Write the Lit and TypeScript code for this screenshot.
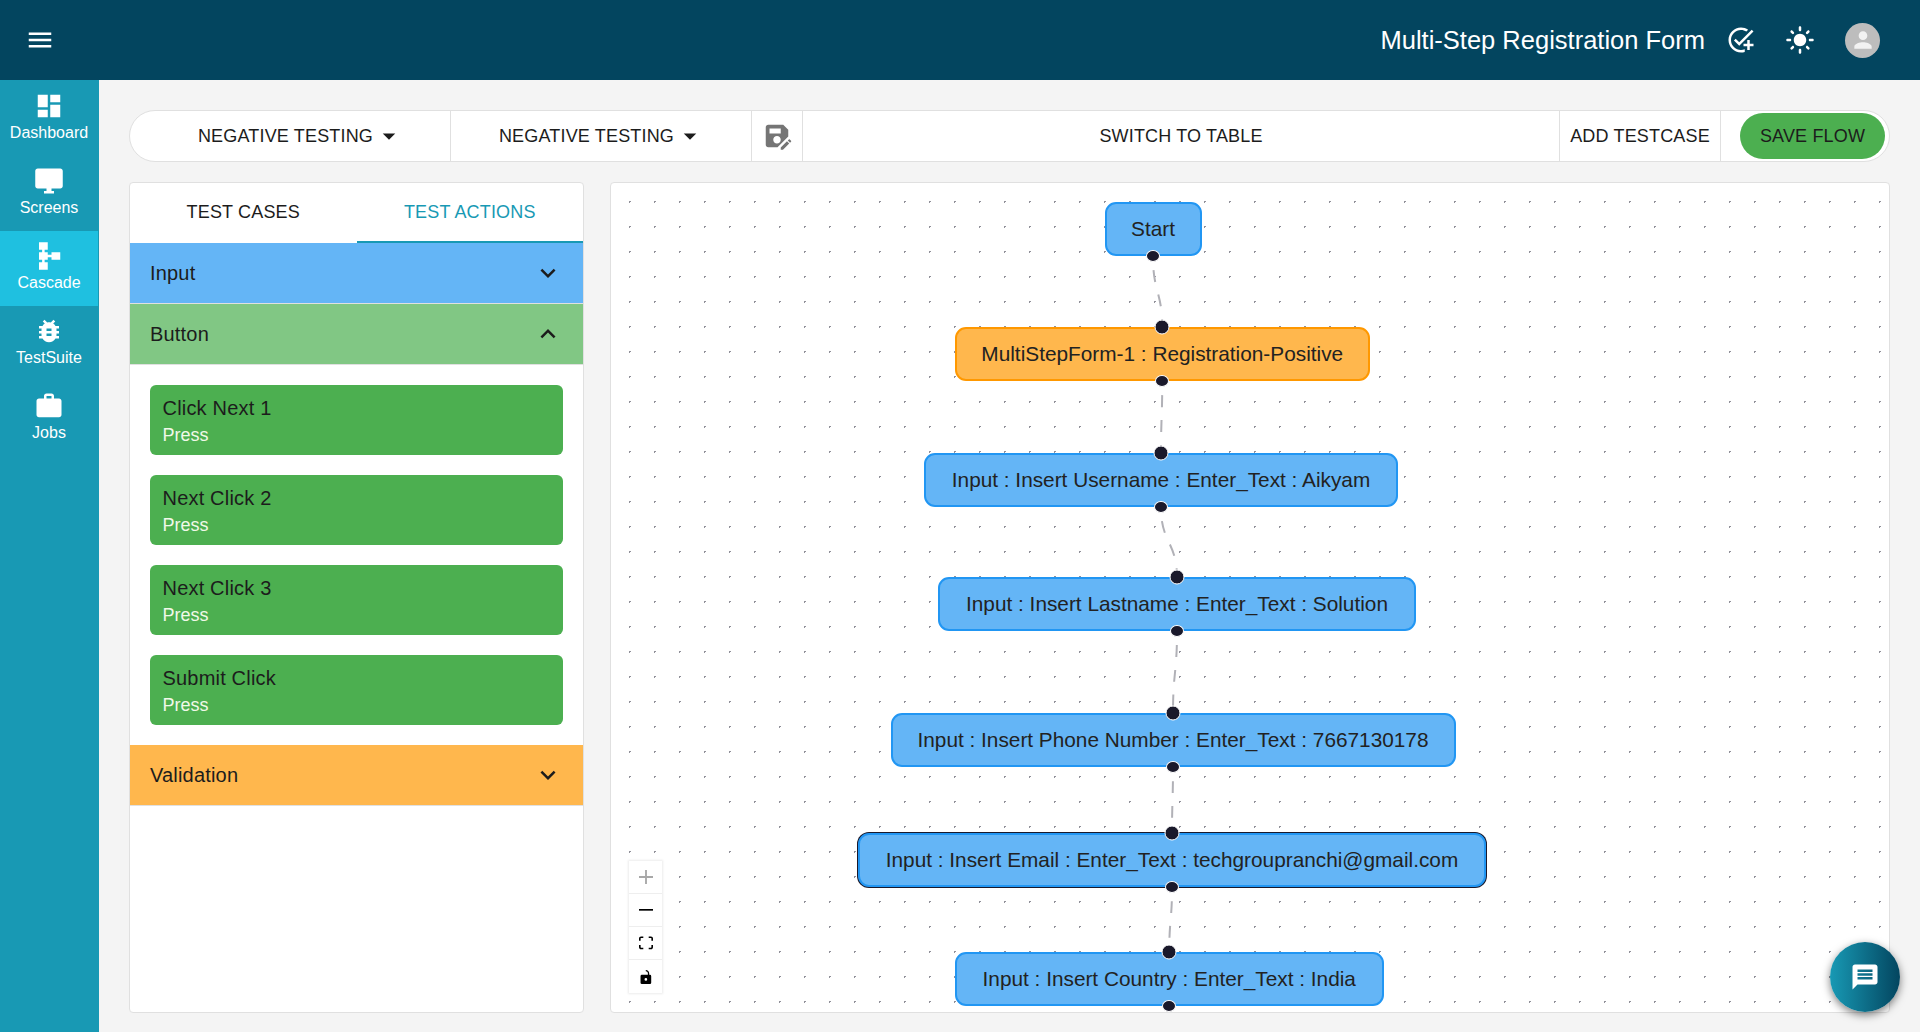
import { LitElement, css, html, svg } from 'lit';
import { customElement } from 'lit/decorators.js';

const ICONS = {
  menu: 'M3 18h18v-2H3v2zm0-5h18v-2H3v2zm0-7v2h18V6H3z',
  dashboard: 'M3 13h8V3H3v10zm0 8h8v-6H3v6zm10 0h8V11h-8v10zm0-18v6h8V3h-8z',
  screens: 'M21 2H3c-1.1 0-2 .9-2 2v12c0 1.1.9 2 2 2h7v2H8v2h8v-2h-2v-2h7c1.1 0 2-.9 2-2V4c0-1.1-.9-2-2-2z',
  cascade: 'M14 9v2h-3V9H8.5V7H11V1H4v6h2.5v2H4v6h2.5v2H4v6h7v-6H8.5v-2H11v-2h3v2h7V9h-7z',
  bug: 'M20 8h-2.81c-.45-.78-1.07-1.45-1.82-1.96L17 4.41 15.59 3l-2.17 2.17C12.96 5.06 12.49 5 12 5c-.49 0-.96.06-1.41.17L8.41 3 7 4.41l1.62 1.63C7.88 6.55 7.26 7.22 6.81 8H4v2h2.09c-.05.33-.09.66-.09 1v1H4v2h2v1c0 .34.04.67.09 1H4v2h2.81c1.04 1.79 2.97 3 5.19 3s4.15-1.21 5.19-3H20v-2h-2.09c.05-.33.09-.66.09-1v-1h2v-2h-2v-1c0-.34-.04-.67-.09-1H20V8zm-6 8h-4v-2h4v2zm0-4h-4v-2h4v2z',
  work: 'M20 6h-4V4c0-1.11-.89-2-2-2h-4c-1.11 0-2 .89-2 2v2H4c-1.11 0-1.99.89-1.99 2L2 19c0 1.11.89 2 2 2h16c1.11 0 2-.89 2-2V8c0-1.11-.89-2-2-2zm-6 0h-4V4h4v2z',
  addTask: 'M22 5.18 10.59 16.6l-4.24-4.24 1.41-1.41 2.83 2.83 10-10L22 5.18zM12 20c-4.42 0-8-3.58-8-8s3.58-8 8-8c1.58 0 3.04.46 4.28 1.25l1.44-1.44C16.1 2.67 14.13 2 12 2 6.48 2 2 6.48 2 12s4.48 10 10 10c1.05 0 2.05-.16 3-.46v-2.1c-.93.36-1.94.56-3 .56zm7-5v-3h-2v3h-3v2h3v3h2v-3h3v-2h-3z',
  sun: 'M12 7c-2.76 0-5 2.24-5 5s2.24 5 5 5 5-2.24 5-5-2.24-5-5-5zM2 13h2c.55 0 1-.45 1-1s-.45-1-1-1H2c-.55 0-1 .45-1 1s.45 1 1 1zm18 0h2c.55 0 1-.45 1-1s-.45-1-1-1h-2c-.55 0-1 .45-1 1s.45 1 1 1zM11 2v2c0 .55.45 1 1 1s1-.45 1-1V2c0-.55-.45-1-1-1s-1 .45-1 1zm0 18v2c0 .55.45 1 1 1s1-.45 1-1v-2c0-.55-.45-1-1-1s-1 .45-1 1zM5.99 4.58c-.39-.39-1.03-.39-1.41 0-.39.39-.39 1.03 0 1.41l1.06 1.06c.39.39 1.03.39 1.41 0s.39-1.03 0-1.41L5.99 4.58zm12.37 12.37c-.39-.39-1.03-.39-1.41 0-.39.39-.39 1.03 0 1.41l1.06 1.06c.39.39 1.03.39 1.41 0 .39-.39.39-1.03 0-1.41l-1.06-1.06zm1.06-10.96c.39-.39.39-1.03 0-1.41-.39-.39-1.03-.39-1.41 0l-1.06 1.06c-.39.39-.39 1.03 0 1.41s1.03.39 1.41 0l1.06-1.06zM7.05 18.36c.39-.39.39-1.03 0-1.41-.39-.39-1.03-.39-1.41 0l-1.06 1.06c-.39.39-.39 1.03 0 1.41s1.03.39 1.41 0l1.06-1.06z',
  person: 'M12 12c2.21 0 4-1.79 4-4s-1.79-4-4-4-4 1.79-4 4 1.79 4 4 4zm0 2c-2.67 0-8 1.34-8 4v2h16v-2c0-2.66-5.33-4-8-4z',
  saveAs: 'M21 12.4V7l-4-4H5c-1.11 0-2 .9-2 2v14c0 1.1.89 2 2 2h7.4l8.6-8.6zM15 15c0 1.66-1.34 3-3 3s-3-1.34-3-3 1.34-3 3-3 3 1.34 3 3zM6 6h9v4H6V6zm13.99 10.25 1.77 1.77L16.77 23H15v-1.77l4.99-4.98zm3.26.26-.85.85-1.77-1.77.85-.85c.2-.2.51-.2.71 0l1.06 1.06c.2.2.2.52 0 .71z',
  caret: 'm7 10 5 5 5-5z',
  expandMore: 'M16.59 8.59 12 13.17 7.41 8.59 6 10l6 6 6-6z',
  expandLess: 'm12 8-6 6 1.41 1.41L12 10.83l4.59 4.58L18 14z',
  message: 'M20 2H4c-1.1 0-1.99.9-1.99 2L2 22l4-4h14c1.1 0 2-.9 2-2V4c0-1.1-.9-2-2-2zm-2 12H6v-2h12v2zm0-3H6V9h12v2zm0-3H6V6h12v2z',
};

const NAV = [
  { label: 'Dashboard', icon: ICONS.dashboard },
  { label: 'Screens', icon: ICONS.screens },
  { label: 'Cascade', icon: ICONS.cascade, active: true },
  { label: 'TestSuite', icon: ICONS.bug },
  { label: 'Jobs', icon: ICONS.work },
];

const ACTIONS = ['Click Next 1', 'Next Click 2', 'Next Click 3', 'Submit Click'];

// canvas coordinates, the canvas inner box starts at 611,183
const NODES = [
  { text: 'Start', x: 493.5, y: 19, w: 97, h: 54, cls: 'blue' },
  { text: 'MultiStepForm-1 : Registration-Positive', x: 343.5, y: 144, w: 415.5, h: 54, cls: 'orange' },
  { text: 'Input : Insert Username : Enter_Text : Aikyam', x: 313, y: 270, w: 474, h: 54, cls: 'blue' },
  { text: 'Input : Insert Lastname : Enter_Text : Solution', x: 327, y: 394, w: 478, h: 54, cls: 'blue' },
  { text: 'Input : Insert Phone Number : Enter_Text : 7667130178', x: 279.5, y: 530, w: 565, h: 54, cls: 'blue' },
  { text: 'Input : Insert Email : Enter_Text : techgroupranchi@gmail.com', x: 247, y: 650, w: 628, h: 54, cls: 'blue selected' },
  { text: 'Input : Insert Country : Enter_Text : India', x: 343.5, y: 769, w: 429.5, h: 54, cls: 'blue' },
];

function icon(d: string, size = 30) {
  return html`<svg class="icon" width=${size} height=${size} viewBox="0 0 24 24"><path d=${d}></path></svg>`;
}

function edgePath(a: (typeof NODES)[number], b: (typeof NODES)[number]) {
  const x1 = a.x + a.w / 2;
  const y1 = a.y + a.h + 1;
  const x2 = b.x + b.w / 2;
  const y2 = b.y;
  const mid = (y1 + y2) / 2;
  return `M${x1} ${y1} C${x1} ${mid} ${x2} ${mid} ${x2} ${y2}`;
}

@customElement('app-root')
export class AppRoot extends LitElement {
  static styles = css`
    :host {
      display: flex;
      flex-direction: column;
      height: 1032px;
      overflow: hidden;
      background: #f4f4f4;
      font-family: 'Liberation Sans', Arial, sans-serif;
      color: #1c1c1c;
    }

    .icon {
      display: block;
      fill: currentColor;
      flex: none;
    }

    .header {
      display: flex;
      align-items: center;
      flex: none;
      height: 80px;
      padding: 0 40px 0 25px;
      background: #03455f;
      color: #fff;
    }

    .title {
      margin-left: auto;
      margin-right: 21px;
      font-size: 25.5px;
    }

    .sun {
      margin: 0 30px 0 29px;
    }

    .avatar {
      display: flex;
      align-items: center;
      justify-content: center;
      width: 35px;
      height: 35px;
      border-radius: 50%;
      background: #bdbdbd;
      color: #f2f2f2;
    }

    .body {
      display: flex;
      flex: 1;
      min-height: 0;
    }

    .sidebar {
      flex: none;
      box-sizing: border-box;
      width: 99px;
      padding-top: 1px;
      background: #1899b4;
      color: #fff;
    }

    .nav-item {
      display: flex;
      flex-direction: column;
      align-items: center;
      box-sizing: border-box;
      width: 98px;
      height: 75px;
      padding-top: 10px;
      font-size: 16px;
      line-height: 20px;
    }

    .nav-item span {
      margin-top: 2px;
    }

    .nav-item.active {
      background: #1fc0e0;
    }

    .main {
      display: flex;
      flex-direction: column;
      flex: 1;
      min-width: 0;
      gap: 20px;
      padding: 30px 30px 19px;
    }

    .toolbar {
      display: flex;
      flex: none;
      box-sizing: border-box;
      height: 52px;
      border: 1px solid #e0e0e0;
      border-radius: 26px;
      background: #fff;
      font-size: 18px;
      letter-spacing: 0.00938em;
    }

    .seg {
      display: flex;
      align-items: center;
      justify-content: center;
      flex: none;
      box-sizing: border-box;
      border-right: 1px solid #e0e0e0;
    }

    .caret {
      margin-left: 1px;
    }

    .seg-select-a {
      width: 321px;
      padding-left: 22px;
    }

    .seg-select-b {
      width: 301px;
      padding-left: 2px;
    }

    .seg-save-icon {
      width: 51px;
      color: #757575;
    }

    .seg-switch {
      flex: 1;
    }

    .seg-add {
      width: 161px;
    }

    .seg-save {
      width: 168px;
      border-right: 0;
      justify-content: flex-start;
      padding-left: 19px;
    }

    .save-btn {
      display: flex;
      align-items: center;
      justify-content: center;
      width: 145px;
      height: 46px;
      border-radius: 23px;
      background: #4caf50;
    }

    .content {
      display: flex;
      flex: 1;
      min-height: 0;
      gap: 26px;
    }

    .panel {
      flex: none;
      box-sizing: border-box;
      width: 455px;
      border: 1px solid #e0e0e0;
      border-radius: 4px;
      background: #fff;
    }

    .tabs {
      display: flex;
      height: 60px;
      font-size: 18px;
      letter-spacing: 0.00938em;
    }

    .tab {
      display: flex;
      align-items: center;
      justify-content: center;
      flex: 1;
      box-sizing: border-box;
      padding-bottom: 2px;
    }

    .tab.active {
      border-bottom: 2px solid #1899b4;
      padding-bottom: 0;
      color: #1899b4;
    }

    .acc {
      display: flex;
      align-items: center;
      justify-content: space-between;
      height: 60px;
      padding: 0 20px;
      border-bottom: 1px solid #e0e0e0;
      font-size: 20px;
      letter-spacing: 0.00938em;
    }

    .acc.input {
      background: #64b5f6;
    }

    .acc.button {
      background: #81c784;
    }

    .acc.validation {
      background: #ffb74d;
    }

    .cards {
      display: flex;
      flex-direction: column;
      gap: 20px;
      padding: 20px;
    }

    .card {
      box-sizing: border-box;
      height: 70px;
      padding: 10px 12.5px;
      border-radius: 6px;
      background: #4caf50;
      font-size: 20px;
      line-height: 26px;
      letter-spacing: 0.00938em;
    }

    .card small {
      display: block;
      color: #f1f8e9;
      font-size: 18px;
      line-height: 29px;
      letter-spacing: 0;
    }

    .canvas {
      position: relative;
      flex: 1;
      min-width: 0;
      border: 1px solid #e0e0e0;
      border-radius: 4px;
      background-color: #fff;
      background-image: radial-gradient(#91919a 1px, transparent 1px);
      background-size: 25px 25px;
      background-position: 6px 6px;
    }

    .edges {
      position: absolute;
      inset: 0;
      width: 100%;
      height: 100%;
      fill: none;
      stroke: #b1b1b7;
      stroke-width: 2;
      stroke-dasharray: 12 13;
      stroke-dashoffset: 12;
    }

    .node {
      position: absolute;
      display: flex;
      align-items: center;
      justify-content: center;
      box-sizing: border-box;
      border: 2px solid #2196f3;
      border-radius: 11px;
      background: #64b5f6;
      font-size: 20.8px;
      color: #222;
      white-space: nowrap;
    }

    .node.orange {
      border-color: #ff9800;
      background: #ffb74d;
    }

    .node.selected {
      box-shadow: 0 0 0 1px #1a192b;
    }

    .handle {
      position: absolute;
      left: 50%;
      box-sizing: content-box;
      border: 1.5px solid #fff;
      border-radius: 50%;
      background: #1a192b;
      transform: translate(-50%, -50%);
    }

    .handle.target {
      top: -2px;
      width: 13px;
      height: 13px;
    }

    .handle.source {
      top: calc(100% + 1.5px);
      width: 12px;
      height: 10px;
    }

    .controls {
      position: absolute;
      left: 18px;
      top: 678px;
      width: 33px;
      background: #fff;
      box-shadow: 0 0 2px 1px rgba(0, 0, 0, 0.08);
    }

    .control {
      display: flex;
      align-items: center;
      justify-content: center;
      box-sizing: border-box;
      height: 33px;
      border-bottom: 1px solid #eee;
    }

    .control:last-child {
      border-bottom: 0;
    }

    .control svg {
      display: block;
      width: 14px;
      height: 14px;
    }

    .control svg.minus {
      height: 2px;
    }

    .control.off {
      fill: #a8a8a8;
    }

    .fab {
      position: absolute;
      left: 1830px;
      top: 942px;
      display: flex;
      align-items: center;
      justify-content: center;
      width: 70px;
      height: 70px;
      border-radius: 50%;
      background: linear-gradient(90deg, #1899b4, #03455f);
      box-shadow: 0 3px 8px rgba(0, 0, 0, 0.5);
      color: #fff;
    }
  `;

  render() {
    return html`
      <div class="header">
        ${icon(ICONS.menu)}
        <div class="title">Multi-Step Registration Form</div>
        ${icon(ICONS.addTask)}
        <div class="sun">${icon(ICONS.sun)}</div>
        <div class="avatar">${icon(ICONS.person, 26)}</div>
      </div>
      <div class="body">
        <div class="sidebar">
          ${NAV.map(
            (item) => html`
              <div class="nav-item ${item.active ? 'active' : ''}">
                ${icon(item.icon)}
                <span>${item.label}</span>
              </div>
            `,
          )}
        </div>
        <div class="main">
          <div class="toolbar">
            <div class="seg seg-select-a">NEGATIVE TESTING <span class="caret">${icon(ICONS.caret)}</span></div>
            <div class="seg seg-select-b">NEGATIVE TESTING <span class="caret">${icon(ICONS.caret)}</span></div>
            <div class="seg seg-save-icon">${icon(ICONS.saveAs)}</div>
            <div class="seg seg-switch">SWITCH TO TABLE</div>
            <div class="seg seg-add">ADD TESTCASE</div>
            <div class="seg seg-save"><div class="save-btn">SAVE FLOW</div></div>
          </div>
          <div class="content">
            ${this.renderPanel()} ${this.renderCanvas()}
          </div>
        </div>
      </div>
      <div class="fab">${icon(ICONS.message)}</div>
    `;
  }

  renderPanel() {
    return html`
      <div class="panel">
        <div class="tabs">
          <div class="tab">TEST CASES</div>
          <div class="tab active">TEST ACTIONS</div>
        </div>
        <div class="acc input">Input ${icon(ICONS.expandMore)}</div>
        <div class="acc button">Button ${icon(ICONS.expandLess)}</div>
        <div class="cards">
          ${ACTIONS.map(
            (name) => html`<div class="card">${name}<small>Press</small></div>`,
          )}
        </div>
        <div class="acc validation">Validation ${icon(ICONS.expandMore)}</div>
      </div>
    `;
  }

  renderCanvas() {
    return html`
      <div class="canvas">
        <svg class="edges">
          ${NODES.slice(1).map((node, i) => svg`<path d=${edgePath(NODES[i], node)}></path>`)}
        </svg>
        ${NODES.map(
          (node, i) => html`
            <div
              class="node ${node.cls}"
              style="left:${node.x}px;top:${node.y}px;width:${node.w}px;height:${node.h}px"
            >
              ${i > 0 ? html`<div class="handle target"></div>` : ''}
              ${node.text}
              <div class="handle source"></div>
            </div>
          `,
        )}
        <div class="controls">
          <div class="control off">
            <svg viewBox="0 0 32 32"><path d="M32 18.133H18.133V32h-4.266V18.133H0v-4.266h13.867V0h4.266v13.867H32z"></path></svg>
          </div>
          <div class="control">
            <svg class="minus" viewBox="0 0 32 5" preserveAspectRatio="none"><path d="M0 0h32v4.2H0z"></path></svg>
          </div>
          <div class="control">
            <svg viewBox="0 0 32 30"><path d="M3.692 4.63c0-.53.4-.938.939-.938h5.215V0H4.708C2.13 0 0 2.054 0 4.63v5.216h3.692V4.63zM27.354 0h-5.2v3.692h5.17c.53 0 .984.4.984.939v5.215H32V4.631A4.624 4.624 0 0027.354 0zm.954 24.83c0 .532-.4.94-.939.94h-5.215v3.768h5.215c2.577 0 4.631-2.13 4.631-4.707v-5.139h-3.692v5.139zm-23.677.94c-.531 0-.939-.4-.939-.94v-5.138H0v5.139c0 2.577 2.13 4.707 4.708 4.707h5.138V25.77H4.631z"></path></svg>
          </div>
          <div class="control">
            <svg viewBox="0 0 25 32"><path fill-rule="evenodd" d="M3 11h18.4a3 3 0 013 3v15a3 3 0 01-3 3H3a3 3 0 01-3-3V14a3 3 0 013-3zm9.2 7.4a3.05 3.05 0 100 6.1 3.05 3.05 0 000-6.1z"></path><path d="M12 0c4.3 0 7.8 3.4 7.8 7.6V12h-3V7.6c0-2.6-2.2-4.7-4.8-4.7z"></path></svg>
          </div>
        </div>
      </div>
    `;
  }
}
